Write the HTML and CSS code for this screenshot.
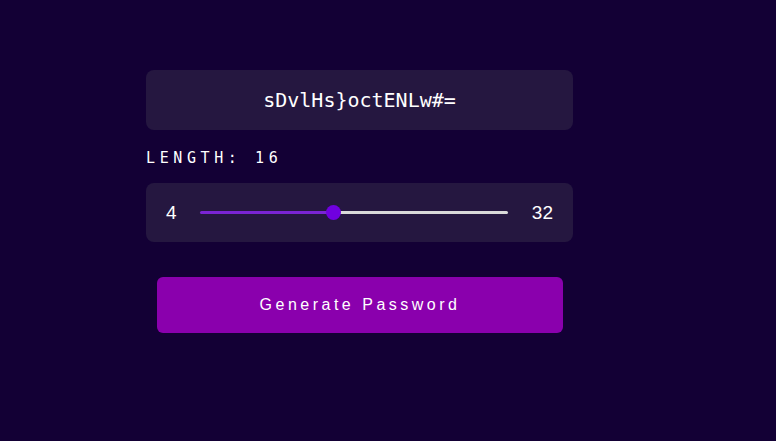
FILE: index.html
```html
<!DOCTYPE html>
<html>
<head>
<meta charset="utf-8">
<link rel="stylesheet" href="styles.css">
</head>
<body>
<main class="app">
  <div class="output">sDvlHs}octENLw#=</div>
  <div class="label">LENGTH: 16</div>
  <div class="range-card">
    <span class="bound">4</span>
    <input class="slider" type="range" min="4" max="32" value="16">
    <span class="bound">32</span>
  </div>
  <button class="generate">Generate Password</button>
</main>
</body>
</html>
```
FILE: styles.css
```css
html, body {
  margin: 0;
  height: 100%;
}
body {
  background: #130035;
  font-family: "Liberation Sans", Arial, sans-serif;
  color: #ffffff;
}
.app {
  width: 427px;
  padding: 70px 0 0 146px;
  display: flex;
  flex-direction: column;
}
.output {
  height: 60px;
  background: #251740;
  border-radius: 8px;
  display: flex;
  align-items: center;
  justify-content: center;
  font-family: "DejaVu Sans Mono", monospace;
  font-size: 20px;
  color: #ffffff;
}
.label {
  margin-top: 20px;
  height: 16px;
  line-height: 16px;
  font-family: "DejaVu Sans Mono", monospace;
  font-size: 15px;
  letter-spacing: 4.6px;
  color: #ffffff;
}
.range-card {
  margin-top: 17px;
  height: 59px;
  background: #251740;
  border-radius: 8px;
  display: flex;
  align-items: center;
  padding: 0 20px;
}
.bound {
  font-size: 19px;
  color: #ffffff;
}
.bound:first-child {
  width: 34px;
}
.bound:last-child {
  width: 23px;
  text-align: right;
}
.slider {
  -webkit-appearance: none;
  appearance: none;
  margin: 0 22px 0 0;
  width: 308px;
  height: 15px;
  background: transparent;
}
.slider::-webkit-slider-runnable-track {
  height: 3px;
  border-radius: 2px;
  background: linear-gradient(to right, #7a24d4 0%, #7a24d4 43%, #d9d9d9 43%, #d9d9d9 100%);
}
.slider::-webkit-slider-thumb {
  -webkit-appearance: none;
  appearance: none;
  width: 15px;
  height: 15px;
  border-radius: 50%;
  background: #7000e0;
  margin-top: -6px;
  border: none;
}
.generate {
  margin: 35px 10px 0 11px;
  height: 56px;
  background: #8a00ad;
  border: none;
  border-radius: 6px;
  color: #ffffff;
  font-family: "Liberation Sans", Arial, sans-serif;
  font-size: 16px;
  letter-spacing: 3.5px;
  padding: 0;
}
```
